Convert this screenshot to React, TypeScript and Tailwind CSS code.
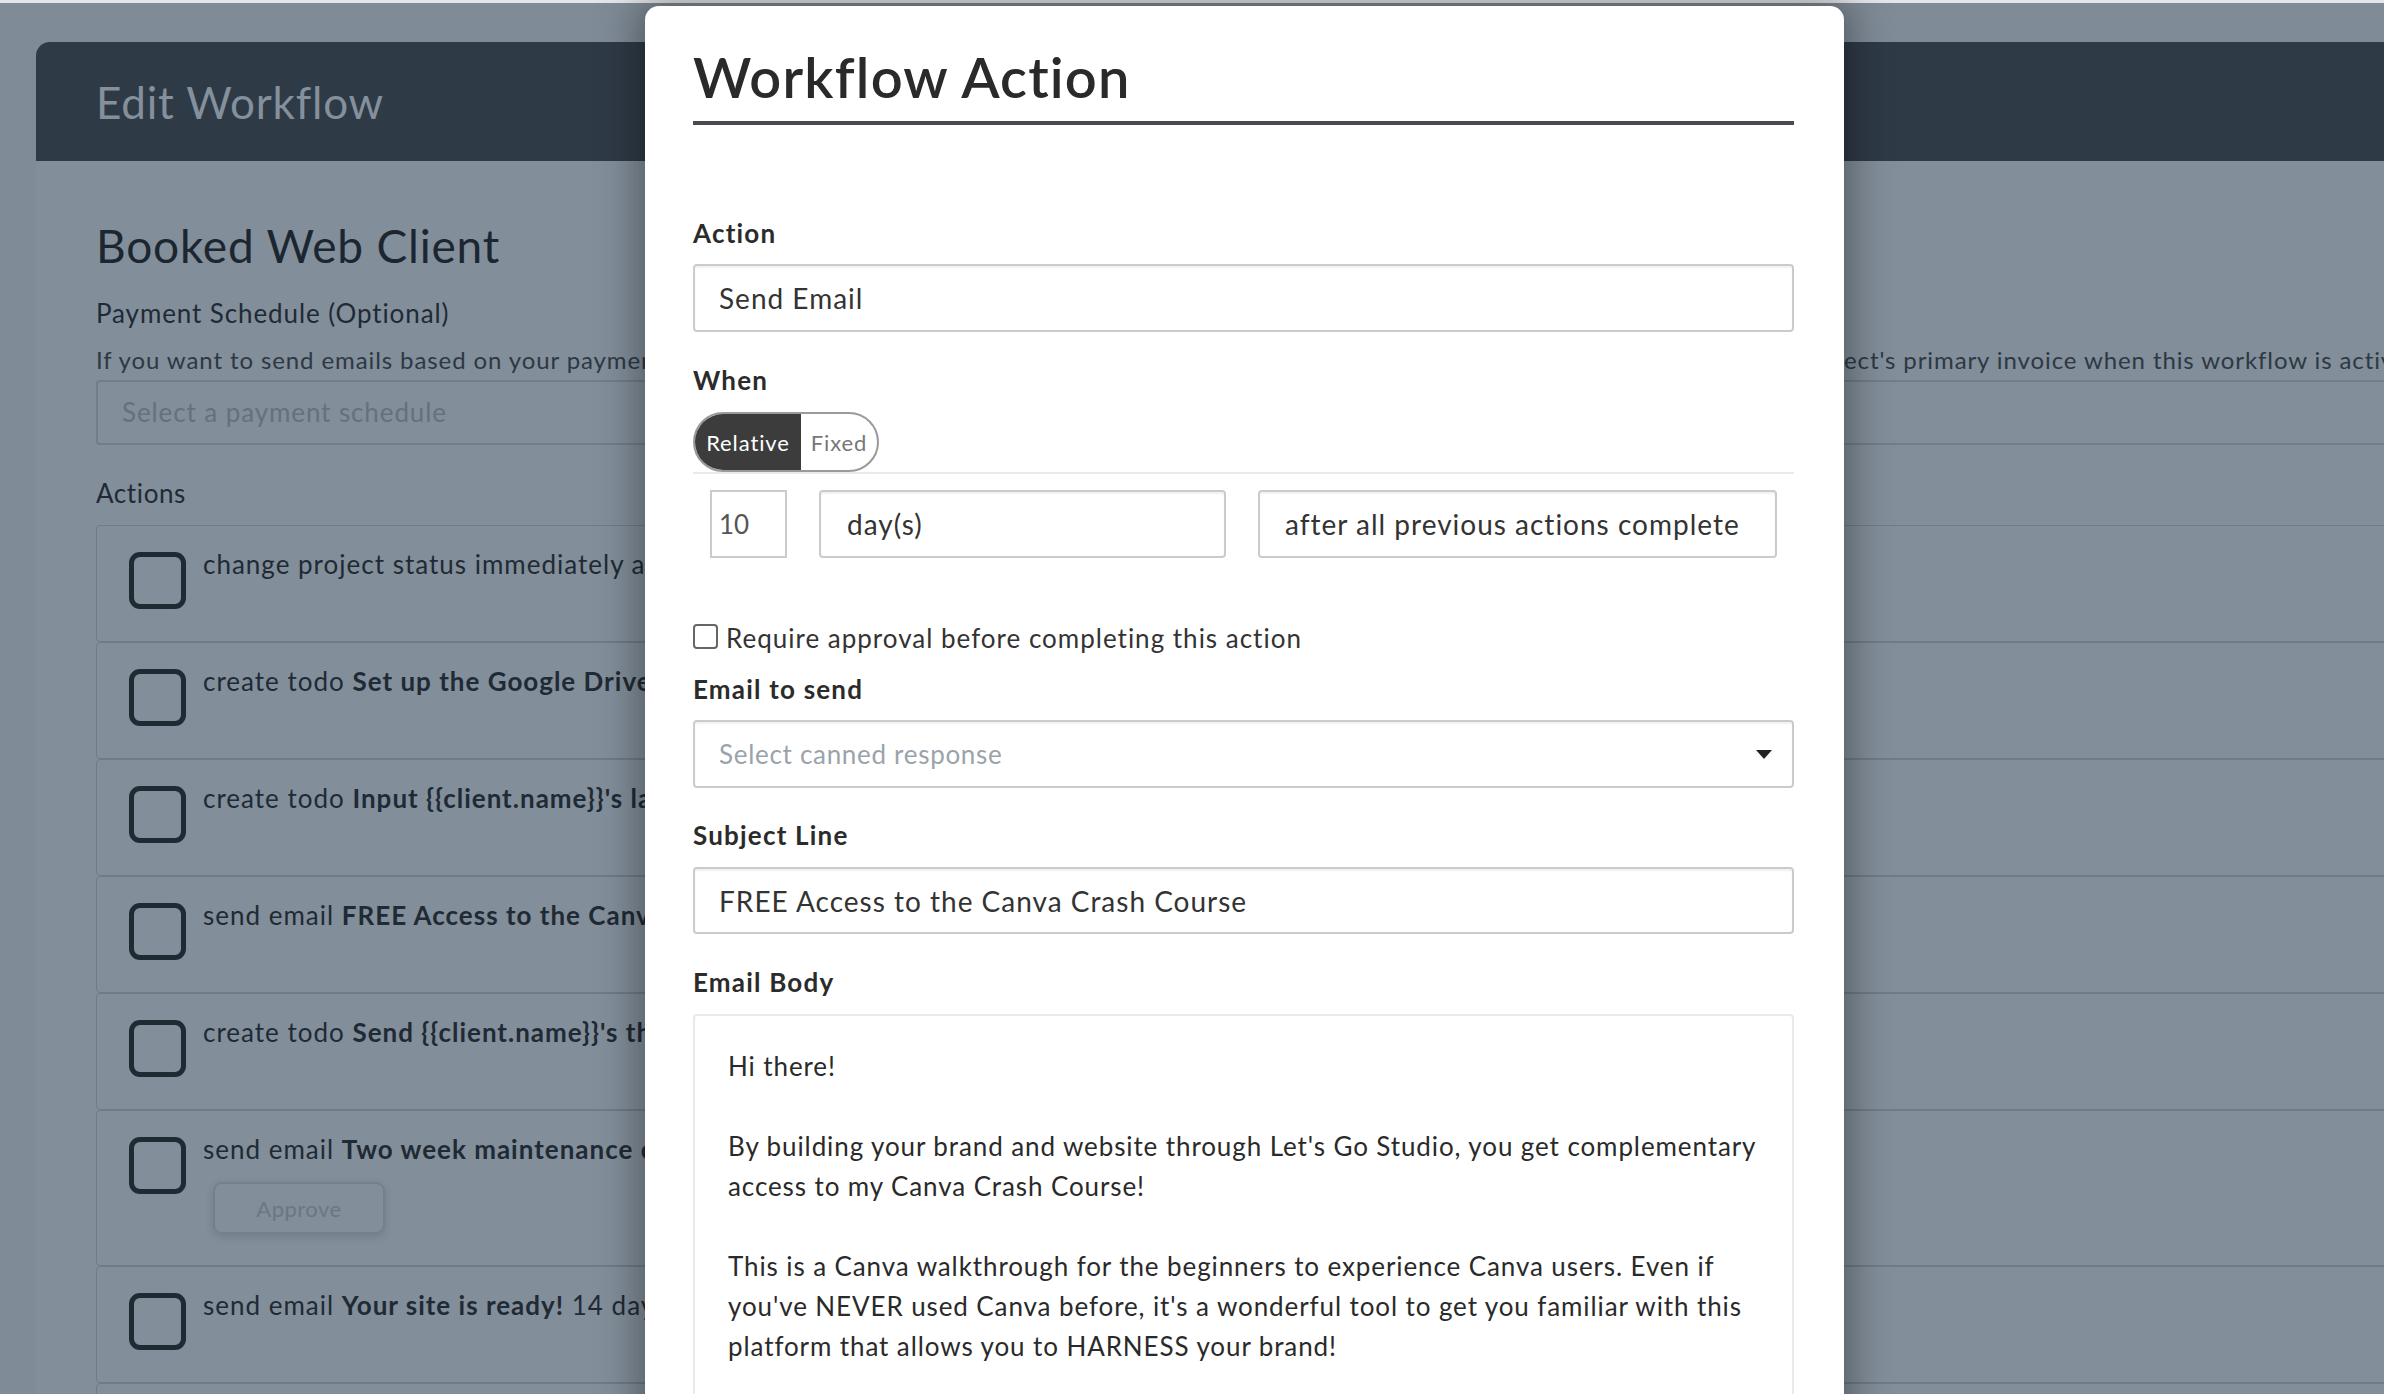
import React from "react";

type Row = { pre: string; bold: string; post: string; approve?: boolean };

const rows: Row[] = [
  { pre: "change project status immediately after workflow begins", bold: "", post: "" },
  { pre: "create todo ", bold: "Set up the Google Drive folder", post: " immediately after all previous actions complete" },
  { pre: "create todo ", bold: "Input {{client.name}}'s launch date", post: " immediately after all previous actions complete" },
  { pre: "send email ", bold: "FREE Access to the Canva Crash Course", post: " 10 days after all previous actions complete" },
  { pre: "create todo ", bold: "Send {{client.name}}'s their final files", post: " immediately after all previous actions complete" },
  { pre: "send email ", bold: "Two week maintenance check-in", post: " 14 days after all previous actions complete", approve: true },
  { pre: "send email ", bold: "Your site is ready!", post: " 14 days after all previous actions complete" },
  { pre: "create todo ", bold: "Archive project", post: " immediately after all previous actions complete" },
];

function BgRow({ r }: { r: Row }) {
  return (
    <div
      className={`flex border border-[#6f7b87] rounded-[4px] pl-[32px] pt-[22px] ${
        r.approve ? "h-[156px]" : "h-[117px]"
      }`}
    >
      <div className="mt-[4px] w-[57px] h-[57px] shrink-0 rounded-[11px] border-[5px] border-[#1f2a33]" />
      <div className="ml-[17px] flex flex-col items-start">
        <div className="text-[26px] leading-[32px] tracking-[1px] text-[#1f2a34] whitespace-nowrap">
          {r.pre}
          {r.bold && <span className="font-bold">{r.bold}</span>}
          {r.post}
        </div>
        {r.approve && (
          <div className="mt-[17px] ml-[10px] w-[172px] h-[52px] rounded-[9px] border-2 border-[#74808c] shadow-[0_3px_8px_rgba(0,0,0,0.12)] flex items-center justify-center text-[22px] tracking-[0.5px] text-[#6b7783]">
            Approve
          </div>
        )}
      </div>
    </div>
  );
}

function Label({ children, className = "" }: { children: React.ReactNode; className?: string }) {
  return (
    <div className={`text-[26px] leading-[32px] tracking-[1.2px] font-bold text-[#2b2b2b] ${className}`}>
      {children}
    </div>
  );
}

function Field({ children, className = "" }: { children: React.ReactNode; className?: string }) {
  return (
    <div
      className={`flex items-center border-2 border-[#cbcbcb] rounded-[4px] bg-white shadow-[inset_0_2px_2px_rgba(0,0,0,0.06)] text-[28px] tracking-[1px] text-[#333333] ${className}`}
    >
      {children}
    </div>
  );
}

export default function App() {
  return (
    <div className="relative w-[2384px] h-[1394px] overflow-hidden bg-[#7f8b97] font-['Lato',sans-serif]">
      <div className="h-[3px] bg-[#e4e6e9]" />
      {/* background page card */}
      <div className="ml-[36px] mt-[39px] w-[2400px] rounded-t-[14px] overflow-hidden bg-[#828e9a]">
        <div className="h-[119px] bg-[#2f3a47] flex items-center pl-[60px] text-[44px] tracking-[0.8px] text-[#84909c]">
          Edit Workflow
        </div>
        <div className="pl-[60px]">
          <div className="mt-[57px] text-[46px] leading-[56px] tracking-[0.8px] text-[#1c2630]">Booked Web Client</div>
          <div className="mt-[23px] text-[26px] leading-[32px] tracking-[0.9px] text-[#1f2a35]">
            Payment Schedule (Optional)
          </div>
          <div className="mt-[16px] flex text-[24px] leading-[30px] tracking-[0.9px] text-[#2d3843] whitespace-nowrap">
            <span className="w-[1748px] shrink-0 overflow-hidden">
              If you want to send emails based on your payment schedule, select a payment schedule. Any payment reminders in this workflow will be applied to the proj
            </span>
            <span>ect's primary invoice when this workflow is activated.</span>
          </div>
          <div className="mt-[5px] h-[65px] border-2 border-[#717d89] rounded-[4px] flex items-center pl-[24px] text-[26px] tracking-[0.9px] text-[#65717d]">
            Select a payment schedule
          </div>
          <div className="mt-[32px] text-[26px] leading-[32px] tracking-[0.6px] text-[#1f2a35]">Actions</div>
          <div className="mt-[16px] flex flex-col">
            {rows.map((r, i) => (
              <BgRow key={i} r={r} />
            ))}
          </div>
        </div>
      </div>

      {/* modal */}
      <div className="absolute left-[645px] top-[6px] w-[1199px] h-[1420px] bg-white rounded-[14px] shadow-[0_0_40px_8px_rgba(0,0,0,0.35)] pt-[41px] pl-[48px] pr-[50px]">
        <div className="text-[56px] leading-[60px] tracking-[1.2px] font-semibold text-[#2a2a2a] pb-[14px] border-b-[4px] border-[#4b4a52]">
          Workflow Action
        </div>

        <Label className="mt-[92px]">Action</Label>
        <Field className="mt-[15px] h-[68px] pl-[24px]">Send Email</Field>

        <Label className="mt-[32px]">When</Label>
        <div className="mt-[16px] border-b-2 border-[#ebe7ea]">
          <div className="flex w-[186px] h-[60px] rounded-full border-2 border-[#9a9a9a] overflow-hidden text-[22px] tracking-[0.9px]">
            <div className="w-[106px] bg-[#3c3c3c] text-white flex items-center justify-center">Relative</div>
            <div className="flex-1 text-[#777777] flex items-center justify-center">Fixed</div>
          </div>
        </div>

        <div className="mt-[16px] px-[17px] flex gap-[32px]">
          <div className="w-[77px] h-[68px] border-2 border-[#cbcbcb] flex items-center pl-[7px] text-[26px] text-[#555555]">
            10
          </div>
          <Field className="w-[407px] h-[68px] pl-[26px]">day(s)</Field>
          <Field className="flex-1 h-[68px] pl-[25px]">after all previous actions complete</Field>
        </div>

        <div className="mt-[62px] flex items-center h-[32px]">
          <div className="w-[25px] h-[25px] rounded-[4px] border-2 border-[#666666]" />
          <div className="ml-[8px] mt-[4px] text-[26px] leading-[32px] tracking-[1px] text-[#333333]">
            Require approval before completing this action
          </div>
        </div>

        <Label className="mt-[21px]">Email to send</Label>
        <Field className="mt-[15px] h-[68px] pl-[24px] pr-[20px] justify-between">
          <span className="text-[26px] tracking-[0.7px] text-[#9aa3ac]">Select canned response</span>
          <svg width="16" height="9" viewBox="0 0 16 9">
            <path d="M0 0 L16 0 L8 9 Z" fill="#222222" />
          </svg>
        </Field>

        <Label className="mt-[31px]">Subject Line</Label>
        <Field className="mt-[16px] h-[67px] pl-[24px]">FREE Access to the Canva Crash Course</Field>

        <Label className="mt-[32px]">Email Body</Label>
        <div className="mt-[16px] h-[600px] border-2 border-[#e9e9e9] rounded-[4px] pl-[33px] pt-[30px] text-[26px] leading-[40px] tracking-[0.9px] text-[#2a2a2a]">
          <div>Hi there!</div>
          <div className="h-[40px]" />
          <div className="whitespace-nowrap">By building your brand and website through Let's Go Studio, you get complementary</div>
          <div className="whitespace-nowrap">access to my Canva Crash Course!</div>
          <div className="h-[40px]" />
          <div className="whitespace-nowrap">This is a Canva walkthrough for the beginners to experience Canva users. Even if</div>
          <div className="whitespace-nowrap">you've NEVER used Canva before, it's a wonderful tool to get you familiar with this</div>
          <div className="whitespace-nowrap">platform that allows you to HARNESS your brand!</div>
          <div className="h-[40px]" />
          <div className="whitespace-nowrap">You'll learn how to create graphics for social media, print and more.</div>
        </div>
      </div>
    </div>
  );
}
